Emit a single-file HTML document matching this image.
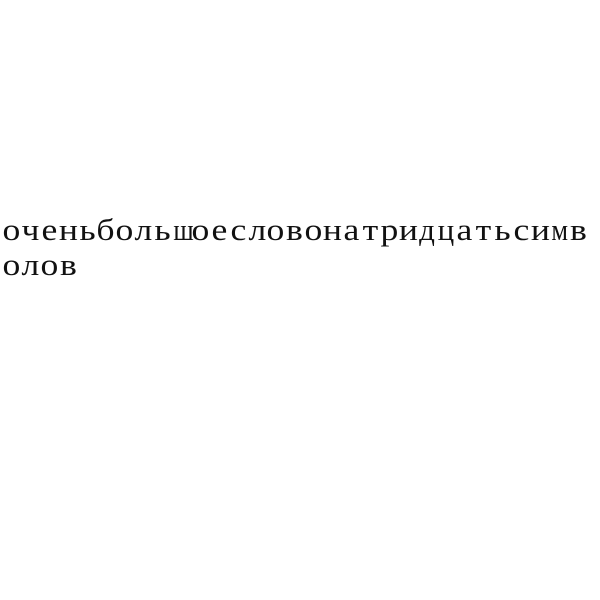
<!DOCTYPE html>
<html><head><meta charset="utf-8"><style>
html,body{margin:0;padding:0;width:600px;height:600px;background:#fff;overflow:hidden}
.l{position:absolute;left:2px;font-family:"Liberation Serif",serif;font-size:31px;line-height:35px;color:#111;white-space:nowrap}
.l span{display:inline-block;width:18.9px;text-align:center;transform:scaleX(1.15)}
.l span.w{transform:scaleX(0.85)}
.l span.m{transform:scaleX(1)}
</style></head><body>
<div class="l" style="top:212px"><span>о</span><span>ч</span><span>е</span><span>н</span><span>ь</span><span>б</span><span>о</span><span>л</span><span>ь</span><span class="w">ш</span><span>о</span><span>е</span><span>с</span><span>л</span><span>о</span><span>в</span><span>о</span><span>н</span><span>а</span><span>т</span><span>р</span><span>и</span><span class="m">д</span><span class="m">ц</span><span>а</span><span>т</span><span>ь</span><span>с</span><span>и</span><span class="w">м</span><span>в</span></div>
<div class="l" style="top:247px"><span>о</span><span>л</span><span>о</span><span>в</span></div>
</body></html>
